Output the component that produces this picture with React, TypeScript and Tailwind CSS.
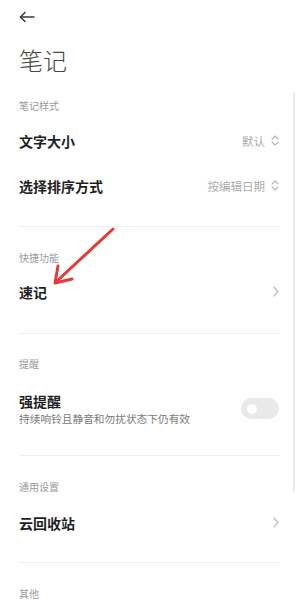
import { ReactNode } from 'react';

const font = { fontFamily: '"Noto Sans CJK SC", "Noto Sans", sans-serif' };

function UpDown() {
  return (
    <svg width="8" height="11" viewBox="0 0 8 11" fill="none" stroke="#b5b5b5" strokeWidth="1.1" strokeLinecap="round" strokeLinejoin="round">
      <path d="M1 4 L4 1 L7 4" />
      <path d="M1 7 L4 10 L7 7" />
    </svg>
  );
}

function Chevron() {
  return (
    <svg width="6" height="11" viewBox="0 0 6 11" fill="none" stroke="#bdbdbd" strokeWidth="1.2" strokeLinecap="round" strokeLinejoin="round">
      <path d="M1 1 L5 5.5 L1 10" />
    </svg>
  );
}

function Label({ children }: { children: ReactNode }) {
  return <div className="h-[14px] text-[10px] leading-[14px] text-[#9a9a9a]">{children}</div>;
}

function Row({ title, right }: { title: string; right?: ReactNode }) {
  return (
    <div className="flex h-[45px] items-center justify-between">
      <span className="text-[14px] font-bold leading-[20px] text-[#1f1f1f]">{title}</span>
      {right}
    </div>
  );
}

function Value({ text }: { text: string }) {
  return (
    <div className="flex items-center gap-[6px]">
      <span className="text-[11.5px] leading-[14px] text-[#ababab]">{text}</span>
      <UpDown />
    </div>
  );
}

function Divider() {
  return <div className="h-px bg-[#efefef]" />;
}

export default function App() {
  return (
    <div className="relative h-[600px] w-[298px] overflow-hidden bg-white" style={font}>
      <div className="flex flex-col px-[19px]">
        <div className="flex h-[34px] items-center">
          <svg width="16" height="12" viewBox="0 0 16 12" fill="none" stroke="#3a3a3a" strokeWidth="1.5" strokeLinecap="round" strokeLinejoin="round">
            <path d="M15 6 H1.5" />
            <path d="M6 1.5 L1.5 6 L6 10.5" />
          </svg>
        </div>
        <div className="mt-[14px] h-[24px] text-[24px] font-light leading-[24px] text-[#454545]">笔记</div>

        <div className="mt-[27px]">
          <Label>笔记样式</Label>
        </div>
        <div className="mt-[5px]">
          <Row title="文字大小" right={<Value text="默认" />} />
          <Row title="选择排序方式" right={<Value text="按编辑日期" />} />
        </div>
        <div className="mt-[18px]">
          <Divider />
        </div>

        <div className="mt-[24px]">
          <Label>快捷功能</Label>
        </div>
        <div className="mt-[4px]">
          <Row title="速记" right={<Chevron />} />
        </div>
        <div className="mt-[19px]">
          <Divider />
        </div>

        <div className="mt-[23px]">
          <Label>提醒</Label>
        </div>
        <div className="mt-[6px] flex items-center justify-between pb-[12px] pt-[14px]">
          <div className="flex flex-col">
            <span className="text-[14px] font-bold leading-[20px] text-[#1f1f1f]">强提醒</span>
            <span className="mt-[1px] text-[10.7px] leading-[14px] text-[#7a7a7a]">持续响铃且静音和勿扰状态下仍有效</span>
          </div>
          <div className="flex h-[21px] w-[38px] items-center rounded-full bg-[#e9e9e9] pl-[6px]">
            <div className="h-[10px] w-[10px] rounded-full bg-white" />
          </div>
        </div>
        <div className="mt-[17px]">
          <Divider />
        </div>

        <div className="mt-[24px]">
          <Label>通用设置</Label>
        </div>
        <div className="mt-[6px]">
          <Row title="云回收站" right={<Chevron />} />
        </div>
        <div className="mt-[17px]">
          <Divider />
        </div>

        <div className="mt-[24px]">
          <Label>其他</Label>
        </div>
      </div>

      <div className="absolute left-[293px] top-[92px] h-[401px] w-[2px] rounded-full bg-[#ececec]" />

      <svg className="absolute left-0 top-0" width="298" height="600" viewBox="0 0 298 600" fill="none">
        <path d="M113 229 L57 281" stroke="#e53a35" strokeWidth="3" strokeLinecap="round" />
        <path d="M58 266 L55 283 L72 279" stroke="#e53a35" strokeWidth="3" strokeLinecap="round" strokeLinejoin="round" />
      </svg>
    </div>
  );
}
